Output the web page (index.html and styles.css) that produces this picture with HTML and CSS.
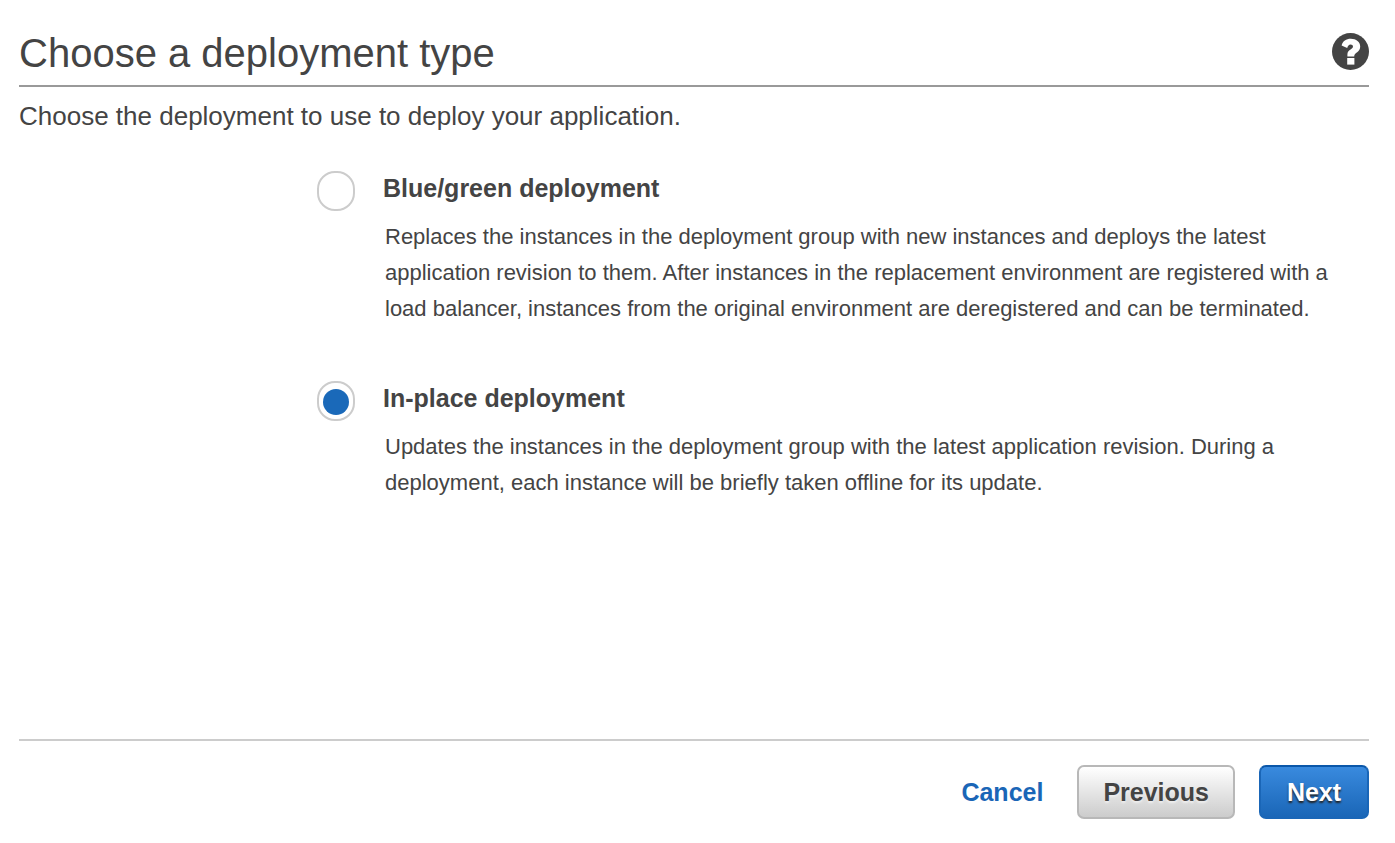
FILE: index.html
```html
<!DOCTYPE html>
<html lang="en">
<head>
<meta charset="utf-8">
<meta name="viewport" content="width=device-width, initial-scale=1">
<title>Choose a deployment type</title>
<link rel="stylesheet" href="styles.css">
</head>
<body>
<form class="wizard">
  <header class="wizard-header">
    <h1 class="title">Choose a deployment type</h1>
    <button class="help" type="button" aria-label="Help">
      <svg viewBox="0 0 37 37" width="37" height="37" aria-hidden="true">
        <circle cx="18.5" cy="18.5" r="18.5" fill="#444"/>
        <path d="M9.6 12.4C10.9 8 14 5.8 18.8 5.8C24.2 5.8 28.2 9 28.2 13.5C28.2 19.4 22.2 19.4 22.2 23.4H15.4V21.4C15.4 16.6 21 16.6 21 13.6C21 12.2 20 11.4 18.6 11.4C16.8 11.4 15.9 12.6 15.2 15Z" fill="#fff"/>
        <rect x="15.2" y="25" width="7.2" height="6.6" fill="#fff"/>
      </svg>
    </button>
  </header>
  <p class="intro">Choose the deployment to use to deploy your application.</p>
  <main class="options">
    <div class="option">
      <input class="radio" type="radio" name="type" id="blue-green" aria-describedby="blue-green-text">
      <div class="option-body">
        <label class="option-label" for="blue-green">Blue/green deployment</label>
        <p class="option-text" id="blue-green-text">Replaces the instances in the deployment group with new instances and deploys the latest application revision to them. After instances in the replacement environment are registered with a load balancer, instances from the original environment are deregistered and can be terminated.</p>
      </div>
    </div>
    <div class="option">
      <input class="radio" type="radio" name="type" id="in-place" aria-describedby="in-place-text" checked>
      <div class="option-body">
        <label class="option-label" for="in-place">In-place deployment</label>
        <p class="option-text" id="in-place-text">Updates the instances in the deployment group with the latest application revision. During a deployment, each instance will be briefly taken offline for its update.</p>
      </div>
    </div>
  </main>
  <footer class="actions">
    <a class="cancel" href="#">Cancel</a>
    <button class="button" type="button">Previous</button>
    <button class="button button-primary" type="submit">Next</button>
  </footer>
</form>
</body>
</html>
```
FILE: styles.css
```css
* { box-sizing: border-box; }

body {
  margin: 0;
  background: #fff;
  color: #444;
  font-family: "Liberation Sans", Arial, sans-serif;
}

.wizard {
  display: flex;
  flex-direction: column;
  min-height: 100vh;
  padding: 20px 26px 24px 19px;
}

.wizard-header {
  display: flex;
  align-items: center;
  justify-content: space-between;
  border-bottom: 2px solid #999;
}

.title {
  margin: 0;
  padding-top: 1px;
  font-size: 40px;
  font-weight: 400;
  line-height: 64px;
}

.help {
  display: flex;
  padding: 0 0 2px;
  border: 0;
  background: none;
  cursor: pointer;
}

.intro {
  margin: 12px 0 0;
  font-size: 26px;
  line-height: 34px;
}

.options {
  display: flex;
  flex: 1;
  flex-direction: column;
  gap: 54px;
  padding: 38px 36px 38px 298px;
}

.option {
  display: flex;
  align-items: flex-start;
  gap: 28px;
}

.radio {
  display: grid;
  flex: none;
  place-items: center;
  width: 38px;
  height: 40px;
  margin: 0;
  border: 2px solid #ccc;
  border-radius: 18px;
  background: #fff;
  appearance: none;
}

.radio:checked::before {
  content: "";
  width: 26px;
  height: 26px;
  margin-top: 2px;
  border-radius: 50%;
  background: #1a69b9;
}

.option-label {
  display: block;
  font-size: 25px;
  font-weight: 700;
  line-height: 34px;
}

.option-text {
  margin: 14px 0 0;
  padding-left: 2px;
  font-size: 22px;
  line-height: 36px;
}

.actions {
  display: flex;
  align-items: center;
  justify-content: flex-end;
  gap: 24px;
  padding-top: 24px;
  border-top: 2px solid #ccc;
}

.cancel {
  margin-right: 10px;
  color: #1a66b7;
  font-size: 25px;
  font-weight: 700;
  text-decoration: none;
}

.button {
  min-width: 110px;
  height: 54px;
  padding: 0 24px;
  border: 2px solid #b8b8b8;
  border-radius: 7px;
  background: linear-gradient(#fff, #ccc);
  color: #444;
  font: 700 25px "Liberation Sans", Arial, sans-serif;
  text-shadow: 0 2px 2px #eee;
  cursor: pointer;
}

.button-primary {
  border-color: #0b57a9 #1a66b7 #1a66b7;
  background: linear-gradient(#398ade, #1a66b7);
  color: #fff;
  text-shadow: 0 2px 2px #222;
}
```
